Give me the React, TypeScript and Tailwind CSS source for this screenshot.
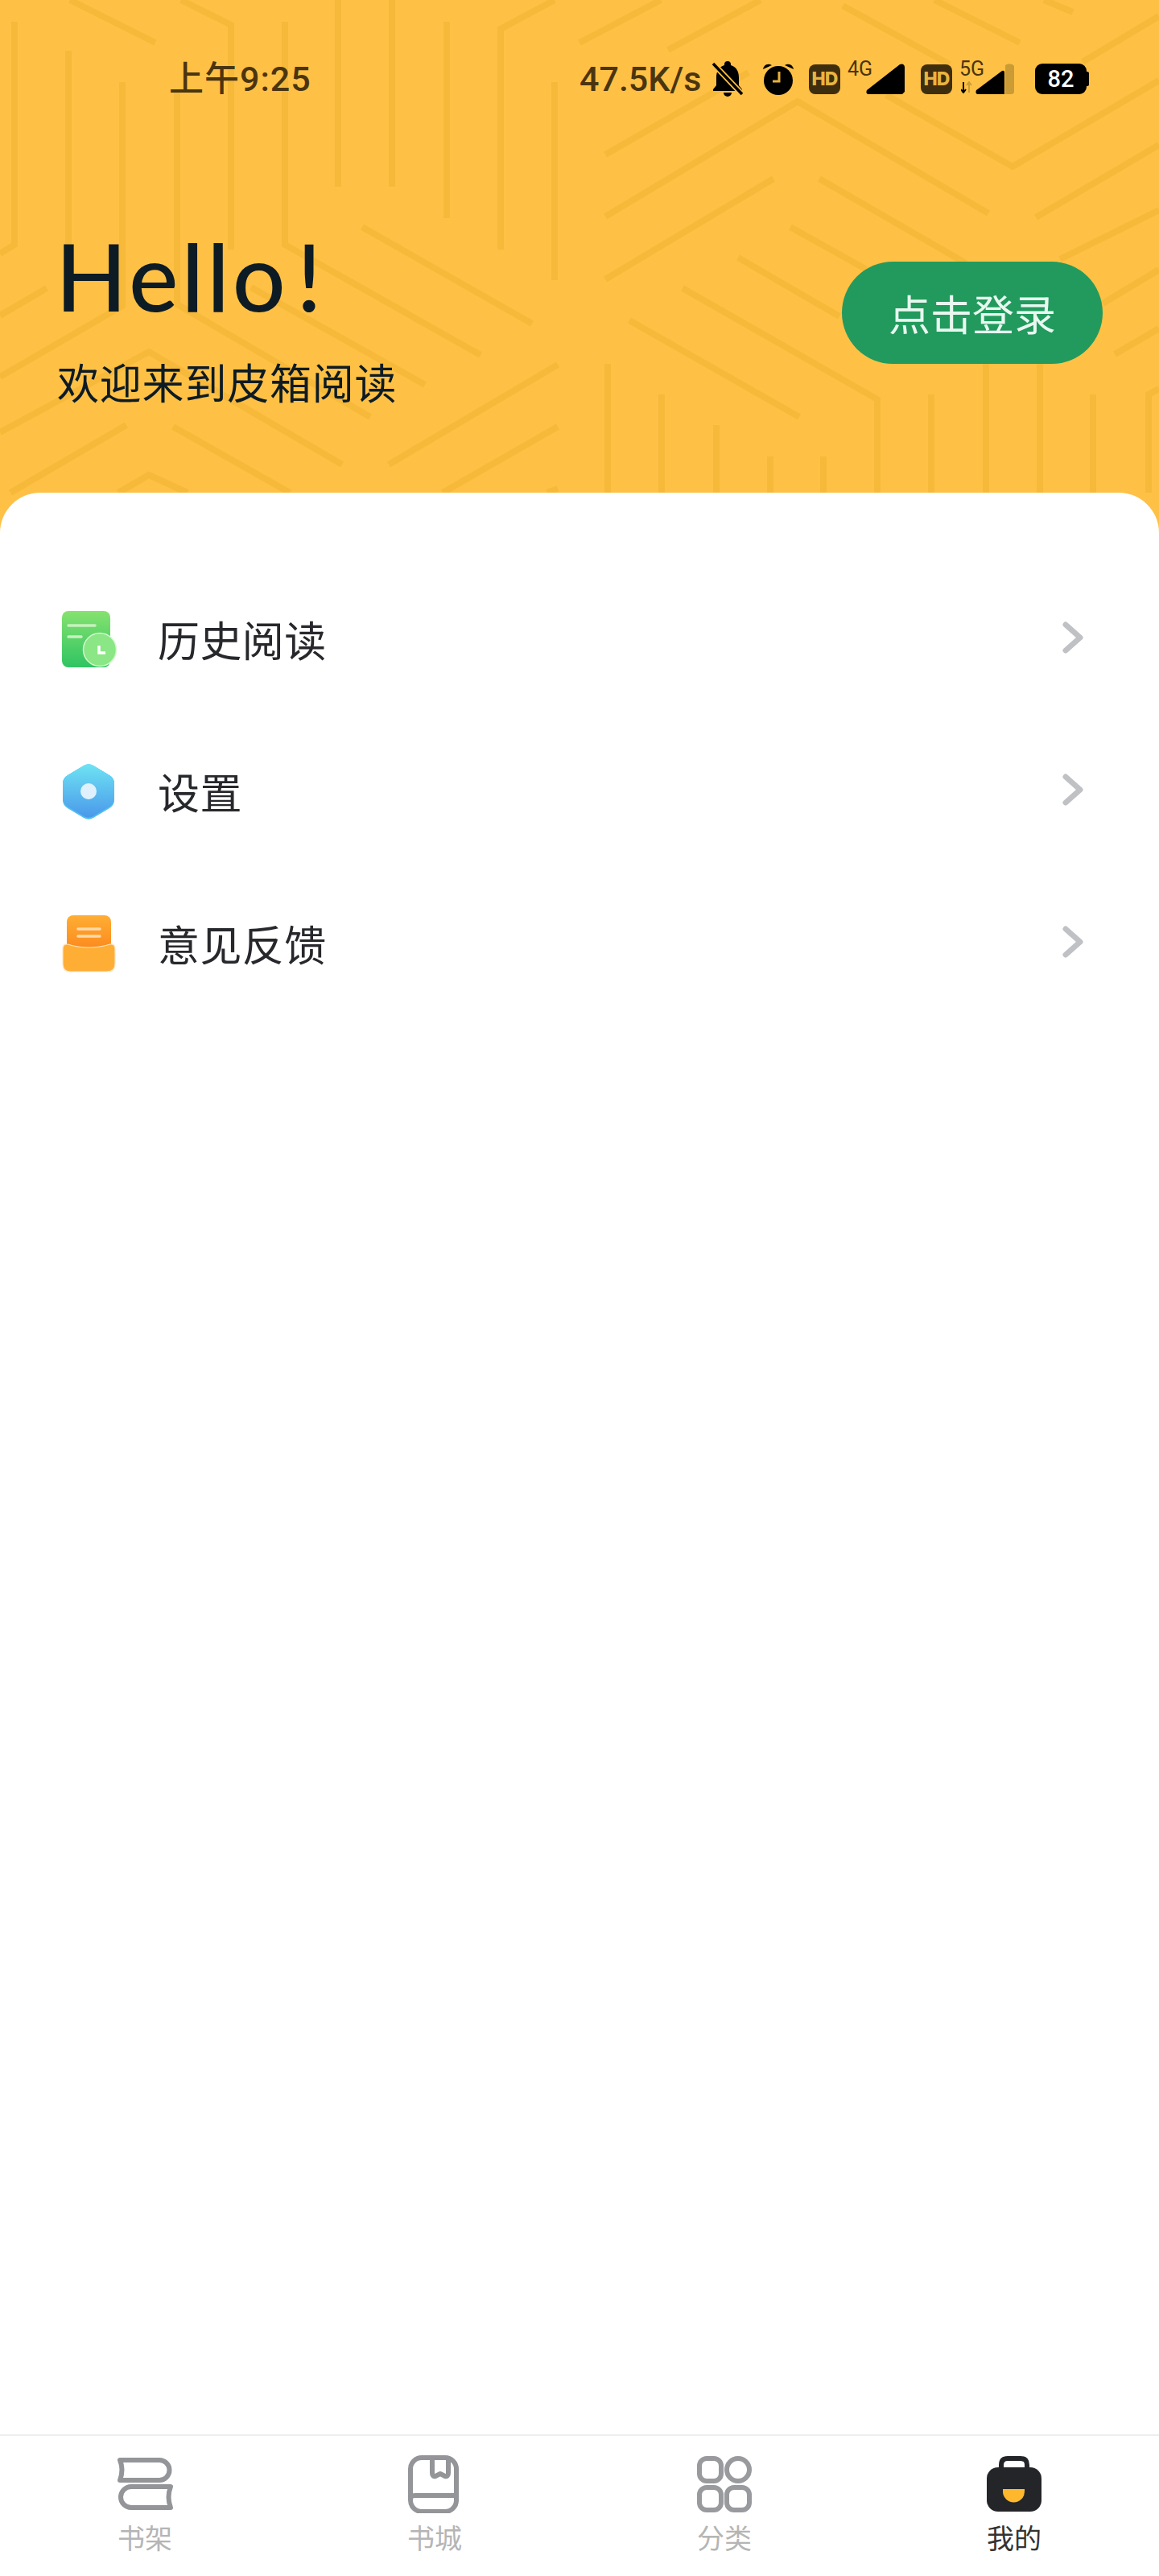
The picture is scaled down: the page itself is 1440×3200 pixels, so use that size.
const patternLines = [
  "18,27 18,304 0,315",
  "85,63 85,308",
  "152,102 152,380 0,468",
  "220,114 220,378 460,518",
  "87,0 193,53",
  "225,0 287,31 287,310",
  "354,27 354,304 597,441",
  "420,0 420,232",
  "487,0 487,232",
  "555,27 555,271",
  "689,0 622,36 622,310",
  "689,102 689,348",
  "450,282 661,402",
  "312,357 528,478",
  "0,392 58,358",
  "0,537 185,437 425,577",
  "157,528 13,612",
  "147,612 185,590 233,612",
  "215,530 360,612",
  "483,577 693,453",
  "550,612 693,530",
  "680,612 693,607",
  "720,53 821,0",
  "830,62 945,0",
  "752,192 930,90",
  "752,269 991,126 1228,265",
  "752,347 961,222",
  "1018,222 1200,327",
  "917,320 1043,393",
  "982,282 1077,335",
  "848,358 1090,496 1090,612",
  "782,398 993,518",
  "755,452 755,612",
  "822,490 822,612",
  "890,528 890,612",
  "957,567 957,612",
  "1023,567 1023,612",
  "1157,490 1157,612",
  "1225,440 1225,612",
  "1292,440 1292,612",
  "1358,490 1358,612",
  "1440,483 1427,490 1427,612",
  "1370,377 1440,335",
  "1317,322 1440,261",
  "1385,440 1440,408",
  "1287,270 1440,180",
  "1047,7 1180,80",
  "1161,0 1267,53",
  "1297,0 1333,15",
  "1101,118 1258,207 1440,100",
  "1345,77 1440,20",
];

function Pattern() {
  return (
    <svg className="absolute inset-0" width="1440" height="662" viewBox="0 0 1440 662" fill="none">
      {patternLines.map((p) => (
        <polyline key={p} points={p} stroke="#F6B93A" strokeWidth="8" />
      ))}
    </svg>
  );
}

function Bell() {
  return (
    <svg width="40" height="44" viewBox="0 0 40 44">
      <path d="M20 0a4 4 0 0 1 4 4v1c7 2 10 8 10 15v10l4 5v2H2v-2l4-5V20c0-7 3-13 10-15V4a4 4 0 0 1 4-4z" fill="#000" />
      <path d="M15 39h10a5 5 0 0 1-10 0z" fill="#000" />
      <path d="M2 3l36 38" stroke="#FFC145" strokeWidth="7" />
      <path d="M2 3l36 38" stroke="#000" strokeWidth="3.500" />
    </svg>
  );
}

function Alarm() {
  return (
    <svg width="40" height="42" viewBox="0 0 40 42">
      <circle cx="20" cy="23" r="18" fill="#000" />
      <path d="M1 9a7 7 0 0 1 11-5zM39 9a7 7 0 0 0-11-5z" fill="#000" />
      <path d="M21 12v12h-8" stroke="#E8B03E" strokeWidth="3" fill="none" />
    </svg>
  );
}

function Hd() {
  return (
    <span className="flex h-[37px] w-[39px] items-center justify-center rounded-[8px] bg-[#3F2E0E] text-[23px] font-extrabold tracking-[-1px] text-[#E9B440] [font-family:Inter,sans-serif]">
      HD
    </span>
  );
}

function Signal({ weak }: { weak?: boolean }) {
  if (weak) {
    return (
      <svg width="48" height="38" viewBox="0 0 48 38">
        <path d="M37 2q3-3 9-1l2 2v33l-2 2H37z" fill="#CB9C36" />
        <path d="M1 33L33 9q3-1 3 2v27H4q-5 0-3-5z" fill="#000" />
      </svg>
    );
  }
  return (
    <svg width="48" height="38" viewBox="0 0 48 38">
      <path d="M1 33L42 1q5-2 6 3v31l-3 3H4q-5 0-3-5z" fill="#000" />
    </svg>
  );
}

function StatusBar() {
  return (
    <div className="relative flex h-[48px] items-center pl-[210px] pt-[2px] text-[#4A3510] [font-family:Inter,'Noto_Sans_CJK_SC',sans-serif]">
      <span className="w-[510px] text-[43px] font-medium leading-none tracking-[1px] [font-family:Roboto,'Noto_Sans_CJK_SC',sans-serif]">上午9:25</span>
      <span className="w-[164px] text-[43px] font-medium leading-none [font-family:Roboto,sans-serif]">47.5K/s</span>
      <span className="w-[63px]"><Bell /></span>
      <span className="w-[58px]"><Alarm /></span>
      <Hd />
      <span className="relative ml-[7px] h-[40px] w-[32px]">
        <span className="absolute -top-[5px] left-[2px] text-[25px] leading-none [font-family:Roboto,sans-serif]">4G</span>
      </span>
      <span className="-ml-[7px] w-[68px]"><Signal /></span>
      <Hd />
      <span className="relative ml-[7px] h-[40px] w-[32px]">
        <span className="absolute -top-[5px] left-[2px] text-[25px] leading-none [font-family:Roboto,sans-serif]">5G</span>
        <svg className="absolute left-[4px] top-[23px]" width="14" height="15" viewBox="0 0 14 15">
          <path d="M3 1v12M0 10l3 4 3-4" stroke="#000" strokeWidth="2" fill="none" />
          <path d="M10 14V2M7 5l3-4 3 4" stroke="#CB9C36" strokeWidth="2" fill="none" />
        </svg>
      </span>
      <span className="-ml-[10px] w-[74px]"><Signal weak /></span>
      <span className="flex h-[38px] w-[64px] items-center justify-center rounded-[9px] bg-black text-[29px] font-medium leading-none text-white [font-family:Roboto,sans-serif]">
        82
      </span>
      <span className="h-[18px] w-[3px] rounded-r-[2px] bg-black" />
    </div>
  );
}

function HistoryIcon() {
  return (
    <svg width="68" height="71" viewBox="0 0 68 71">
      <defs>
        <linearGradient id="h1" x1="0" y1="0" x2="0" y2="1">
          <stop offset="0" stopColor="#86E26F" />
          <stop offset="1" stopColor="#2FC463" />
        </linearGradient>
      </defs>
      <rect x="0" y="0" width="60" height="70" rx="8" fill="url(#h1)" />
      <path d="M8 18h33M8 32h16" stroke="#C5F2BC" strokeWidth="3.500" strokeLinecap="round" />
      <circle cx="47" cy="48" r="20.500" fill="#8BE685" stroke="#D4F7CE" strokeWidth="1.500" />
      <path d="M46 43v9h8" stroke="#fff" strokeWidth="3.500" fill="none" />
    </svg>
  );
}

function SettingsIcon() {
  return (
    <svg width="68" height="71" viewBox="0 0 68 71">
      <defs>
        <linearGradient id="h2" x1="0" y1="0" x2="0" y2="1">
          <stop offset="0" stopColor="#6EE3F3" />
          <stop offset="1" stopColor="#4A98EA" />
        </linearGradient>
      </defs>
      <path d="M26 3q6-3.500 12 0l20 12q6 3.500 6 10v21q0 6-6 10L38 68q-6 3.500-12 0L6 56q-6-4-6-10V25q0-6.500 6-10z" fill="#4FC0F0" transform="translate(1 0)" />
      <path d="M26 3q6-3.500 12 0l20 12q6 3.500 6 10v19q0 6-6 10L38 66q-6 3.500-12 0L6 54q-6-4-6-10V25q0-6.500 6-10z" fill="url(#h2)" transform="translate(1 0)" />
      <circle cx="33" cy="35" r="10" fill="#E0F1FD" />
    </svg>
  );
}

function FeedbackIcon() {
  return (
    <svg width="68" height="71" viewBox="0 0 68 71">
      <defs>
        <linearGradient id="h3" x1="0" y1="0" x2="0" y2="1">
          <stop offset="0" stopColor="#FFAE35" />
          <stop offset="1" stopColor="#FB881C" />
        </linearGradient>
      </defs>
      <rect x="6" y="0" width="55" height="44" rx="8" fill="url(#h3)" />
      <path d="M20 17h27M20 26h27" stroke="#FFD9A8" strokeWidth="3.500" strokeLinecap="round" />
      <path d="M7 36Q33 44 60 36Q66 35 66 42V60Q66 70 56 70H10Q1 70 1 60V42Q1 35 7 36Z" fill="#FFAE35" stroke="#FFE5C0" strokeWidth="1.200" />
    </svg>
  );
}

function MenuRow({ icon, label }: { icon: React.ReactNode; label: string }) {
  return (
    <div className="flex h-[189px] items-center pl-[77px] pr-[94px]">
      <span className="mt-[6px] w-[119px] shrink-0">{icon}</span>
      <span className="flex-1 pt-[4px] text-[52px] leading-none tracking-[0.4px] text-[#27282C]">{label}</span>
      <svg width="26" height="40" viewBox="0 0 26 40" fill="none">
        <path d="M4 4l18 16L4 36" stroke="#BFC1C4" strokeWidth="7" strokeLinecap="round" strokeLinejoin="round" />
      </svg>
    </div>
  );
}

function ShelfIcon() {
  return (
    <svg width="72" height="72" viewBox="0 0 72 72" fill="none" stroke="#939598" strokeWidth="6" strokeLinejoin="round">
      <path d="M5 6H54A12 12 0 0 1 54 31H5Q10 18 5 6Z" />
      <path d="M68 39H19A12.500 12.500 0 0 0 19 65H68Q63 52 68 39Z" />
    </svg>
  );
}

function StoreIcon() {
  return (
    <svg width="72" height="72" viewBox="0 0 72 72" fill="none" stroke="#939598" strokeWidth="6" strokeLinejoin="round">
      <rect x="6" y="3" width="57" height="67" rx="14" />
      <path d="M6 54Q6 50 12 50H63" />
      <path d="M33 3V22Q33 27 37 26L43 23L49 26Q53 27 53 22V3" />
    </svg>
  );
}

function CategoryIcon() {
  return (
    <svg width="72" height="72" viewBox="0 0 72 72" fill="none" stroke="#999A9D" strokeWidth="6">
      <rect x="5" y="4" width="27" height="28" rx="9" />
      <ellipse cx="53" cy="18" rx="14" ry="14" />
      <rect x="5" y="40" width="27" height="28" rx="9" />
      <rect x="39" y="40" width="28" height="28" rx="9" />
    </svg>
  );
}

function MineIcon() {
  return (
    <svg width="72" height="72" viewBox="0 0 72 72">
      <path d="M20 16V12Q20 4 28 4H44Q52 4 52 12V16" fill="none" stroke="#232529" strokeWidth="6" />
      <rect x="2" y="15" width="68" height="55" rx="14" fill="#232529" />
      <path d="M22 42H49V45A13.500 13.500 0 0 1 22 45Z" fill="#FFB82E" />
    </svg>
  );
}

function Tab({ icon, label, active }: { icon: React.ReactNode; label: string; active?: boolean }) {
  return (
    <div className="flex flex-col items-center pt-[24px]">
      <span className="h-[72px]">{icon}</span>
      <span className={`mt-[8px] text-[34px] leading-[44px] ${active ? "text-[#333333]" : "text-[#B5B5B5]"}`}>{label}</span>
    </div>
  );
}

export default function App() {
  return (
    <div className="flex h-[3200px] w-[1440px] flex-col overflow-hidden bg-white [font-family:'Noto_Sans_CJK_SC',sans-serif]">
      <div className="relative h-[662px] shrink-0 bg-[#FFC145] pt-[73px]">
        <Pattern />
        <StatusBar />
        <div className="relative mt-[164px] flex items-start justify-between pl-[71px] pr-[70px]">
          <div>
            <div className="-ml-[2px] text-[116px] font-medium leading-[116px] tracking-[4px] [word-spacing:-24px] text-[#0D1B25] [font-family:Lato,sans-serif]">Hello !</div>
            <div className="mt-[43px] text-[52px] leading-[60px] tracking-[0.8px] text-[#0D1B25]">欢迎来到皮箱阅读</div>
          </div>
          <div className="mt-[40px] flex h-[127px] w-[324px] items-center justify-center rounded-full bg-[#229A5D] text-[52px] leading-none text-[#E8F8F0]">
            点击登录
          </div>
        </div>
      </div>
      <div className="relative -mt-[50px] flex-1 rounded-t-[50px] bg-white pt-[85px]">
        <MenuRow icon={<HistoryIcon />} label="历史阅读" />
        <MenuRow icon={<SettingsIcon />} label="设置" />
        <MenuRow icon={<FeedbackIcon />} label="意见反馈" />
      </div>
      <div className="grid h-[176px] shrink-0 grid-cols-4 border-t-2 border-[#EEEEEE] bg-white">
        <Tab icon={<ShelfIcon />} label="书架" />
        <Tab icon={<StoreIcon />} label="书城" />
        <Tab icon={<CategoryIcon />} label="分类" />
        <Tab icon={<MineIcon />} label="我的" active />
      </div>
    </div>
  );
}
